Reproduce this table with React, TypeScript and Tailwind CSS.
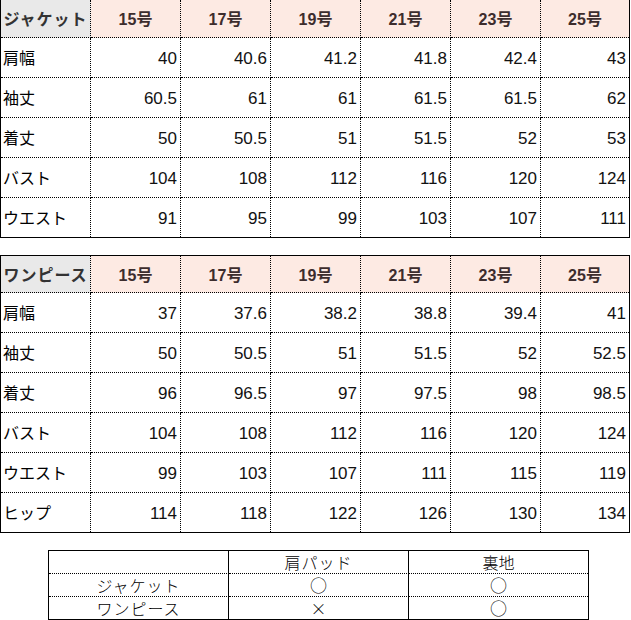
const SIZES = ['15号', '17号', '19号', '21号', '23号', '25号'];

const JACKET = [
  { label: '肩幅', values: ['40', '40.6', '41.2', '41.8', '42.4', '43'] },
  { label: '袖丈', values: ['60.5', '61', '61', '61.5', '61.5', '62'] },
  { label: '着丈', values: ['50', '50.5', '51', '51.5', '52', '53'] },
  { label: 'バスト', values: ['104', '108', '112', '116', '120', '124'] },
  { label: 'ウエスト', values: ['91', '95', '99', '103', '107', '111'] },
];

const ONEPIECE = [
  { label: '肩幅', values: ['37', '37.6', '38.2', '38.8', '39.4', '41'] },
  { label: '袖丈', values: ['50', '50.5', '51', '51.5', '52', '52.5'] },
  { label: '着丈', values: ['96', '96.5', '97', '97.5', '98', '98.5'] },
  { label: 'バスト', values: ['104', '108', '112', '116', '120', '124'] },
  { label: 'ウエスト', values: ['99', '103', '107', '111', '115', '119'] },
  { label: 'ヒップ', values: ['114', '118', '122', '126', '130', '134'] },
];

const OPTIONS = [
  { name: 'ジャケット', pad: '○', lining: '○' },
  { name: 'ワンピース', pad: '×', lining: '○' },
];

function Mark({ v }: { v: string }) {
  return v === '○' ? <span className="text-[17px] leading-[16px]">○</span> : <span>{v}</span>;
}

function SizeTable({ title, rows, headH, className = '' }: { title: string; rows: { label: string; values: string[] }[]; headH: string; className?: string }) {
  return (
    <div className={'grid grid-cols-[90px_90px_90px_90px_90px_90px_88px] w-[630px] border border-black ' + className}>
      <div className={'flex items-center justify-center pt-[3px] bg-[#e9e9e9] text-[#333] font-bold text-[16px] tracking-[1px] border-r border-b border-dotted border-black ' + headH}>{title}</div>
      {SIZES.map((s, i) => (
        <div key={s} className={'flex items-center justify-center pt-[3px] bg-[#fdeae3] text-[#3d2d2d] font-bold text-[16px] border-b border-dotted border-black ' + headH + (i < 5 ? ' border-r' : '')}>{s}</div>
      ))}
      {rows.map((r, ri) => {
        const last = ri === rows.length - 1;
        const h = last ? ' h-[39px]' : ' h-[40px] border-b';
        return [
          <div key={r.label} className={'flex items-center pl-[2px] pt-[3px] text-[16px] text-black border-r border-dotted border-black' + h}>{r.label}</div>,
          ...r.values.map((v, i) => (
            <div key={r.label + i} className={'flex items-center justify-end pr-[3px] pt-[3px] text-[17px] text-[#111] border-dotted border-black' + h + (i < 5 ? ' border-r' : '')}>{v}</div>
          )),
        ];
      })}
    </div>
  );
}

export default function App() {
  return (
    <div className="w-[631px] h-[620px] overflow-hidden bg-white font-['Liberation_Sans','Noto_Sans_CJK_JP',sans-serif]">
      <SizeTable title="ジャケット" rows={JACKET} headH="h-[38px]" className="-mt-px" />
      <SizeTable title="ワンピース" rows={ONEPIECE} headH="h-[37px]" className="mt-[17px]" />
      <div className="ml-[48px] mt-[17px] w-[541px] grid grid-cols-[180px_180px_179px] border border-black text-[16px] leading-[20px] text-black font-['Noto_Sans_CJK_JP',sans-serif] font-light">
        <div className="h-[23px] border-r border-b border-black [border-bottom-style:dotted]" />
        <div className="h-[23px] flex items-center justify-center tracking-[1px] border-r border-b border-black [border-bottom-style:dotted]">肩パッド</div>
        <div className="h-[23px] flex items-center justify-center border-b border-dotted border-black">裏地</div>
        {OPTIONS.map((o, i) => {
          const b = i === 0 ? ' h-[23px] border-b' : ' h-[22px]';
          return [
            <div key={o.name} className={'flex items-center justify-center tracking-[1px] border-r border-black [border-bottom-style:dotted]' + b}>{o.name}</div>,
            <div key={o.name + 'p'} className={'flex items-center justify-center border-r border-black [border-bottom-style:dotted]' + b}><Mark v={o.pad} /></div>,
            <div key={o.name + 'l'} className={'flex items-center justify-center border-dotted border-black' + b}><Mark v={o.lining} /></div>,
          ];
        })}
      </div>
    </div>
  );
}
